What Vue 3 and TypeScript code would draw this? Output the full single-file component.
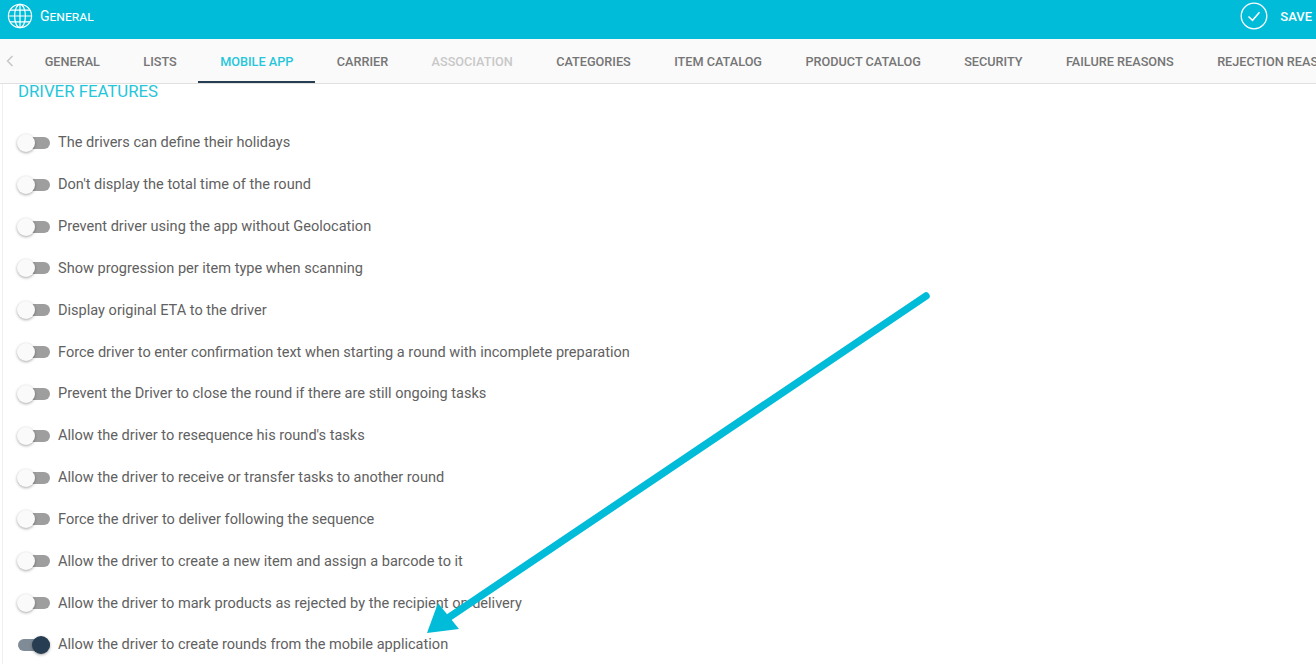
<script setup lang="ts">
const tabs = [
  { label: 'GENERAL' },
  { label: 'LISTS' },
  { label: 'MOBILE APP', active: true },
  { label: 'CARRIER' },
  { label: 'ASSOCIATION', disabled: true },
  { label: 'CATEGORIES' },
  { label: 'ITEM CATALOG' },
  { label: 'PRODUCT CATALOG' },
  { label: 'SECURITY' },
  { label: 'FAILURE REASONS' },
  { label: 'REJECTION REASONS' },
]

const features = [
  { label: 'The drivers can define their holidays' },
  { label: "Don't display the total time of the round" },
  { label: 'Prevent driver using the app without Geolocation' },
  { label: 'Show progression per item type when scanning' },
  { label: 'Display original ETA to the driver' },
  { label: 'Force driver to enter confirmation text when starting a round with incomplete preparation' },
  { label: 'Prevent the Driver to close the round if there are still ongoing tasks' },
  { label: "Allow the driver to resequence his round's tasks" },
  { label: 'Allow the driver to receive or transfer tasks to another round' },
  { label: 'Force the driver to deliver following the sequence' },
  { label: 'Allow the driver to create a new item and assign a barcode to it' },
  { label: 'Allow the driver to mark products as rejected by the recipient on delivery' },
  { label: 'Allow the driver to create rounds from the mobile application', on: true },
]
</script>

<template>
  <div class="page">
    <header class="topbar">
      <div class="title">
        <svg class="globe" viewBox="0 0 26 26" fill="none" stroke="#fff" stroke-width="1.2">
          <circle cx="13" cy="13" r="11.6" />
          <ellipse cx="13" cy="13" rx="5.4" ry="11.6" />
          <path d="M13 1.4v23.2M1.4 13h23.2M3 7.2h20M3 18.8h20" />
        </svg>
        <span class="title-text">General</span>
      </div>
      <div class="save">
        <svg class="check" viewBox="0 0 28 28" fill="none" stroke="#fff">
          <circle cx="14" cy="14" r="12.8" stroke-width="1.3" />
          <path d="M8.5 14.5l4 3.8 7-8" stroke-width="1.5" />
        </svg>
        <span>SAVE</span>
      </div>
    </header>

    <nav class="tabbar">
      <svg class="chev" viewBox="0 0 8 12" fill="none" stroke="#c4c4c4" stroke-width="1.4">
        <path d="M6.5 1L1.5 6l5 5" />
      </svg>
      <div
        v-for="tab in tabs"
        :key="tab.label"
        class="tab"
        :class="{ active: tab.active, disabled: tab.disabled }"
      >
        {{ tab.label }}
      </div>
    </nav>

    <main class="content">
      <h2 class="heading">DRIVER FEATURES</h2>
      <ul class="list">
        <li v-for="item in features" :key="item.label" class="row">
          <span class="switch" :class="{ on: item.on }"><span class="knob"></span></span>
          <span class="label">{{ item.label }}</span>
        </li>
      </ul>
    </main>

    <svg class="arrow" viewBox="0 0 1316 664" fill="none">
      <path d="M926 296L445 620" stroke="#00bcd8" stroke-width="7.5" stroke-linecap="round" />
      <polygon points="427,633 459,629 438,603" fill="#00bcd8" />
    </svg>
  </div>
</template>

<style scoped>
.page {
  position: relative;
  width: 1316px;
  height: 664px;
  overflow: hidden;
  background: #fff;
  font-family: Roboto, "Liberation Sans", sans-serif;
}

.topbar {
  height: 39px;
  background: #00bcd8;
  color: #fff;
  display: flex;
  align-items: center;
  justify-content: space-between;
  padding: 0 4px 0 7px;
}

.title {
  display: flex;
  align-items: center;
  gap: 7px;
  margin-top: -8px;
}

.globe {
  width: 26px;
  height: 26px;
}

.title-text {
  font-size: 14px;
  font-variant: small-caps;
}

.save {
  display: flex;
  align-items: center;
  gap: 12px;
  font-size: 13px;
  font-weight: 500;
  margin-top: -7px;
}

.check {
  width: 28px;
  height: 28px;
}

.tabbar {
  height: 45px;
  box-sizing: border-box;
  background: #fafafa;
  border-bottom: 1px solid #e0e0e0;
  display: flex;
  align-items: stretch;
  overflow: hidden;
  padding-left: 6px;
}

.chev {
  width: 8px;
  height: 12px;
  align-self: center;
  margin-right: 9px;
  flex: none;
}

.tab {
  flex: none;
  padding: 0 21.7px;
  display: flex;
  align-items: center;
  font-size: 12.7px;
  font-weight: 500;
  color: #757575;
  white-space: nowrap;
  box-sizing: border-box;
}

.tab.active {
  color: #26c6da;
  border-bottom: 2px solid #263d52;
  padding-top: 2px;
}

.tab.disabled {
  color: #c8c8c8;
}

.content {
  margin-left: 2px;
  padding-left: 15px;
  border-left: 1px solid #f0f0f0;
  height: 580px;
}

.heading {
  margin: 0;
  font-size: 16.8px;
  font-weight: 400;
  line-height: 14px;
  color: #26c6da;
}

.list {
  list-style: none;
  margin: 24px 0 0;
  padding: 0;
}

.row {
  height: 41.83px;
  display: flex;
  align-items: center;
  gap: 8px;
  font-size: 14.55px;
  color: #616161;
}

.switch {
  position: relative;
  width: 32px;
  height: 12px;
  border-radius: 6px;
  background: #9e9e9e;
  flex: none;
}

.knob {
  position: absolute;
  left: -1px;
  top: -3px;
  width: 18px;
  height: 18px;
  border-radius: 50%;
  background: #fafafa;
  box-shadow: 0 1px 3px rgba(0, 0, 0, 0.35);
}

.switch.on {
  background: #7f8b96;
}

.switch.on .knob {
  left: 14px;
  background: #263d52;
}

.arrow {
  position: absolute;
  inset: 0;
  width: 1316px;
  height: 664px;
  pointer-events: none;
}
</style>
